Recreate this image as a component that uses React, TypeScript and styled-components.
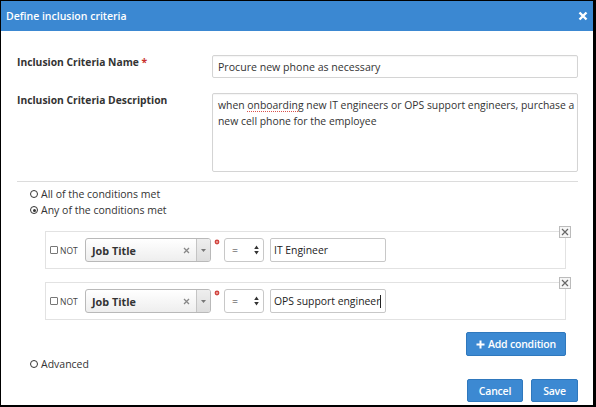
import React from "react";
import styled, { createGlobalStyle } from "styled-components";

const Global = createGlobalStyle`
  html, body { margin: 0; padding: 0; background: #000; }
  body { font-family: "Open Sans", "Liberation Sans", Arial, sans-serif; color: #333; }
  * { box-sizing: border-box; }
`;

const Dialog = styled.div`
  margin: 1px 3px 0 1px;
  width: 592px;
  height: 404px;
  background: #fff;
  display: flex;
  flex-direction: column;
`;

const Header = styled.div`
  height: 30px;
  background: #3b88d2;
  display: flex;
  align-items: center;
  justify-content: space-between;
  padding: 0 5px 0 5px;
  color: #fff;
`;

const Title = styled.div`
  font-size: 10.5px;
  font-weight: 600;
`;

const CloseX = styled.div`
  display: flex;
  align-items: center;
`;

const Body = styled.div`
  padding: 24px 15px 0 16px;
  display: flex;
  flex-direction: column;
`;

const FieldRow = styled.div<{ $mt?: number }>`
  display: grid;
  grid-template-columns: 195px 1fr;
  margin-top: ${(p) => p.$mt ?? 0}px;
`;

const Label = styled.div`
  font-size: 10.3px;
  font-weight: 700;
  color: #333;
  line-height: 14px;
`;

const Req = styled.span`
  color: #c9302c;
`;

const Field = styled.div<{ $h: number }>`
  height: ${(p) => p.$h}px;
  border: 1px solid #d4d4d4;
  border-radius: 2px;
  font-size: 10.6px;
  color: #333;
  padding: 4px 2px 4px 5px;
  line-height: 14px;
  box-shadow: inset 0 1px 1px rgba(0, 0, 0, 0.04);
`;

const AreaField = styled(Field)`
  padding-top: 3px;
  line-height: 16px;
  font-size: 10.4px;
`;

const Spell = styled.span`
  text-decoration: underline dotted #d9534f;
  text-underline-offset: 2px;
`;

const Separator = styled.div`
  margin-top: 9px;
  height: 1px;
  background: #dcdcdc;
`;

const RadioGroup = styled.div`
  margin-top: 4px;
  padding-left: 13px;
  display: flex;
  flex-direction: column;
`;

const RadioLine = styled.div`
  height: 16px;
  display: flex;
  align-items: center;
  gap: 3px;
  font-size: 10.5px;
  color: #333;
`;

const RadioDot = styled.span<{ $on?: boolean }>`
  width: 8px;
  height: 8px;
  border-radius: 50%;
  border: 1.4px solid #333;
  display: inline-flex;
  align-items: center;
  justify-content: center;
  &::after {
    content: "";
    width: 3px;
    height: 3px;
    border-radius: 50%;
    background: ${(p) => (p.$on ? "#333" : "transparent")};
  }
`;

const ConditionList = styled.div`
  margin: 13px 12px 0 28px;
  display: flex;
  flex-direction: column;
  gap: 13px;
`;

const ConditionBox = styled.div`
  position: relative;
  height: 38px;
  border: 1px solid #e2e2e2;
  display: flex;
  align-items: center;
  padding-left: 4px;
`;

const RemoveBox = styled.div`
  position: absolute;
  right: -6px;
  top: -6px;
  width: 12px;
  height: 12px;
  border: 1px solid #bbb;
  background: #f6f6f6;
  display: flex;
  align-items: center;
  justify-content: center;
`;

const NotLabel = styled.div`
  display: flex;
  align-items: center;
  gap: 2px;
  font-size: 8.5px;
  color: #444;
  width: 35px;
`;

const Check = styled.span`
  width: 8px;
  height: 8px;
  border: 1px solid #777;
  border-radius: 1px;
  background: #fff;
`;

const SelectBox = styled.div`
  width: 126px;
  height: 24px;
  border: 1px solid #b9b9b9;
  border-radius: 3px;
  background: linear-gradient(#fff, #eee);
  display: flex;
  align-items: center;
  overflow: hidden;
`;

const SelectText = styled.div`
  flex: 1;
  padding-left: 6px;
  font-size: 10.8px;
  font-weight: 700;
  color: #333;
`;

const ClearX = styled.div`
  width: 20px;
  display: flex;
  justify-content: center;
`;

const ArrowPart = styled.div`
  width: 14px;
  height: 100%;
  border-left: 1px solid #c4c4c4;
  background: linear-gradient(#eee, #ddd);
  display: flex;
  align-items: center;
  justify-content: center;
`;

const Star = styled.div`
  width: 12px;
  align-self: flex-start;
  margin-top: 7px;
  display: flex;
  justify-content: center;
`;

const EqSelect = styled.div`
  width: 40px;
  height: 24px;
  border: 1px solid #c8c8c8;
  border-radius: 3px;
  background: #fff;
  display: flex;
  align-items: center;
  justify-content: space-between;
  padding: 0 4px 0 7px;
  font-size: 10.5px;
  color: #333;
  margin-left: 1px;
`;

const ValueInput = styled.div`
  margin-left: 6px;
  width: 116px;
  height: 24px;
  border: 1px solid #c8c8c8;
  border-radius: 2px;
  display: flex;
  align-items: center;
  padding-left: 3px;
  font-size: 10.4px;
  font-weight: 400;
  color: #222;
  white-space: nowrap;
  overflow: hidden;
`;

const Caret = styled.span`
  display: inline-block;
  flex: none;
  width: 1px;
  height: 13px;
  background: #222;
`;

const AddRow = styled.div`
  margin: 12px 12px 0 0;
  display: flex;
  justify-content: flex-end;
`;

const Button = styled.div<{ $w: number; $h: number }>`
  width: ${(p) => p.$w}px;
  height: ${(p) => p.$h}px;
  background: #3c89d2;
  border: 1px solid #2f78bd;
  border-radius: 2px;
  color: #fff;
  font-size: 10.5px;
  font-weight: 600;
  display: flex;
  align-items: center;
  justify-content: center;
  gap: 3px;
  letter-spacing: -0.2px;
`;

const AdvancedRow = styled.div`
  padding-left: 13px;
`;

const Footer = styled.div`
  margin-top: 7px;
  display: flex;
  justify-content: flex-end;
  gap: 8px;
`;

const Updown = () => (
  <svg width="5" height="10" viewBox="0 0 5 10">
    <path d="M2.5 0.5 L4.8 4 L0.2 4 Z M2.5 9.5 L4.8 6 L0.2 6 Z" fill="#333" />
  </svg>
);

const Condition = ({ value, caret }: { value: string; caret?: boolean }) => (
  <ConditionBox>
    <RemoveBox>
      <svg width="8" height="8" viewBox="0 0 8 8">
        <path d="M1 1 L7 7 M7 1 L1 7" stroke="#666" strokeWidth="1.2" />
      </svg>
    </RemoveBox>
    <NotLabel>
      <Check />
      NOT
    </NotLabel>
    <SelectBox>
      <SelectText>Job Title</SelectText>
      <ClearX>
        <svg width="7" height="7" viewBox="0 0 7 7">
          <path d="M1 1 L6 6 M6 1 L1 6" stroke="#888" strokeWidth="1.3" />
        </svg>
      </ClearX>
      <ArrowPart>
        <svg width="5" height="3" viewBox="0 0 5 3">
          <path d="M0 0 L5 0 L2.5 3 Z" fill="#777" />
        </svg>
      </ArrowPart>
    </SelectBox>
    <Star>
      <svg width="6" height="6" viewBox="0 0 6 6">
        <circle cx="3" cy="3" r="2.4" fill="#d0453f" />
        <circle cx="3" cy="3" r="0.9" fill="#f3b5b2" />
      </svg>
    </Star>
    <EqSelect>
      <span>=</span>
      <Updown />
    </EqSelect>
    <ValueInput>
      {value}
      {caret && <Caret />}
    </ValueInput>
  </ConditionBox>
);

export default function App() {
  return (
    <>
      <Global />
      <Dialog>
        <Header>
          <Title>Define inclusion criteria</Title>
          <CloseX>
            <svg width="10" height="10" viewBox="0 0 10 10">
              <path d="M1.5 1.5 L8.5 8.5 M8.5 1.5 L1.5 8.5" stroke="#fff" strokeWidth="2.4" />
            </svg>
          </CloseX>
        </Header>
        <Body>
          <FieldRow>
            <Label>
              Inclusion Criteria Name <Req>*</Req>
            </Label>
            <Field $h={23}>Procure new phone as necessary</Field>
          </FieldRow>
          <FieldRow $mt={15}>
            <Label>Inclusion Criteria Description</Label>
            <AreaField $h={79}>
              when <Spell>onboarding</Spell> new IT engineers or OPS support engineers, purchase a new cell
              phone for the employee
            </AreaField>
          </FieldRow>
          <Separator />
          <RadioGroup>
            <RadioLine>
              <RadioDot />
              All of the conditions met
            </RadioLine>
            <RadioLine>
              <RadioDot $on />
              Any of the conditions met
            </RadioLine>
          </RadioGroup>
          <ConditionList>
            <Condition value="IT Engineer" />
            <Condition value="OPS support engineer" caret />
          </ConditionList>
          <AddRow>
            <Button $w={100} $h={24}>
              <svg width="9" height="9" viewBox="0 0 9 9">
                <path d="M4.5 0.5 V8.5 M0.5 4.5 H8.5" stroke="#fff" strokeWidth="2" />
              </svg>
              Add condition
            </Button>
          </AddRow>
          <AdvancedRow>
            <RadioLine>
              <RadioDot />
              Advanced
            </RadioLine>
          </AdvancedRow>
          <Footer>
            <Button $w={56} $h={23}>Cancel</Button>
            <Button $w={47} $h={23}>Save</Button>
          </Footer>
        </Body>
      </Dialog>
    </>
  );
}
